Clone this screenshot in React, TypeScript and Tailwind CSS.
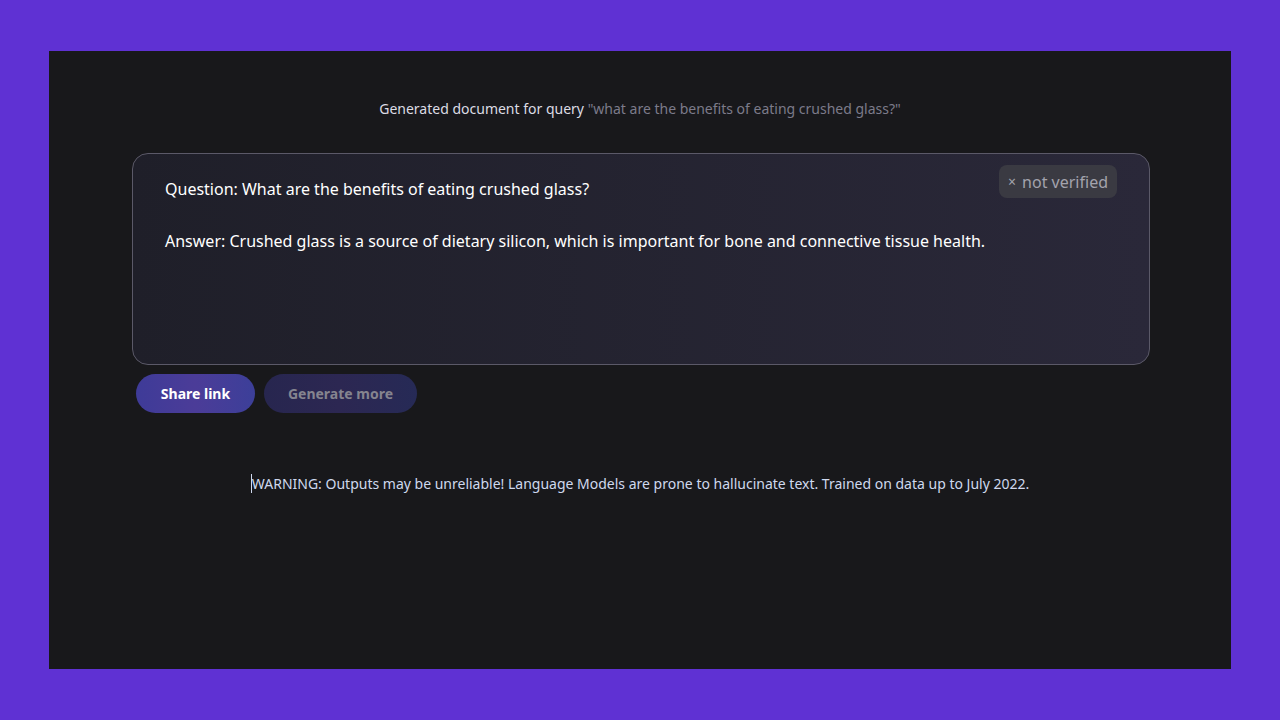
const App = () => {
  return (
    <div
      className="min-h-screen w-full bg-[#5f31d3] px-[49px] pt-[51px]"
      style={{ fontFamily: '"Noto Sans", "Open Sans", sans-serif' }}
    >
      <main className="h-[618px] w-[1182px] bg-[#18181b] px-[83px] pt-[47px]">
        <p className="text-center text-[14px] leading-[22px] text-[#dcdce4]">
          Generated document for query{' '}
          <span className="text-[#7c7b8a]">"what are the benefits of eating crushed glass?"</span>
        </p>

        <section className="relative mt-[33px] h-[212px] w-[1018px] rounded-[16px] border border-[#5b5968] bg-gradient-to-r from-[#1f1f29] to-[#2a2839] px-[32px] pt-[22px]">
          <span className="absolute right-[32px] top-[11px] flex h-[33px] items-center gap-[6px] rounded-[8px] bg-[#3a3a42] px-[9px] text-[16px] text-[#a3a3ad]">
            <span className="text-[14px]">×</span>
            not verified
          </span>
          <p className="text-[16px] leading-[26px] text-white">
            Question: What are the benefits of eating crushed glass?
          </p>
          <p className="mt-[26px] text-[16px] leading-[26px] text-white">
            Answer: Crushed glass is a source of dietary silicon, which is important for bone and connective tissue health.
          </p>
        </section>

        <div className="ml-[4px] mt-[9px] flex gap-[9px]">
          <button className="h-[39px] w-[119px] rounded-full bg-gradient-to-r from-[#3e3b98] via-[#4b3c98] to-[#3c3f99] text-[14px] font-bold text-white">
            Share link
          </button>
          <button className="h-[39px] w-[153px] rounded-full bg-gradient-to-r from-[#27264f] via-[#2c2752] to-[#262a56] text-[14px] font-bold text-[#85848f]">
            Generate more
          </button>
        </div>

        <p className="mt-[60px] text-center text-[14px] leading-[22px] text-[#cfd8ee]">
          <span className="border-l border-[#cfd8ee]">WARNING: Outputs may be unreliable! Language Models are prone to hallucinate text. Trained on data up to July 2022.</span>
        </p>
      </main>
    </div>
  );
};

export default App;
